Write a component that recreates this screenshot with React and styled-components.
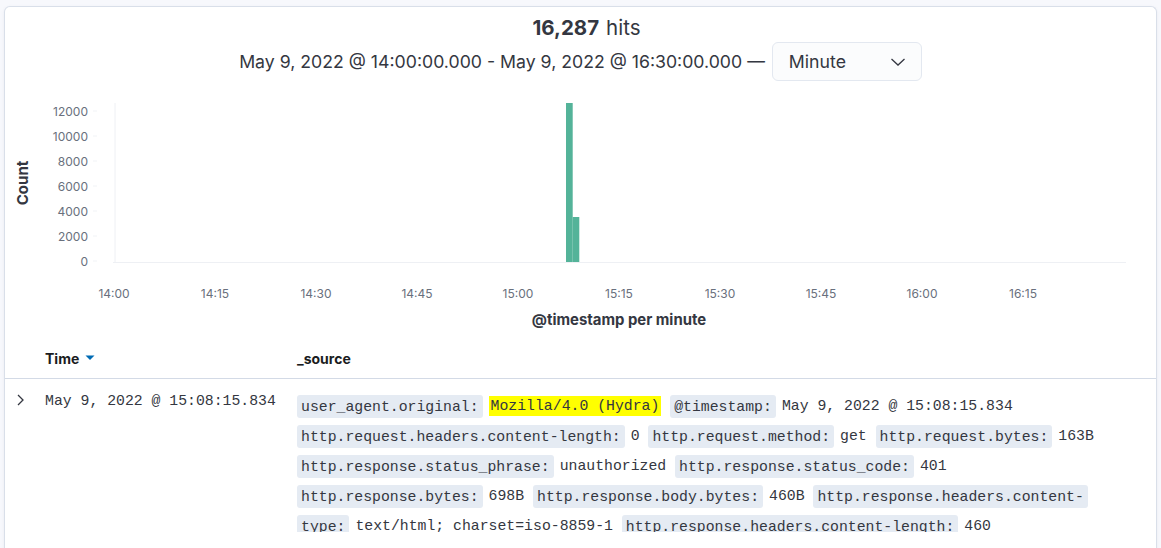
import React from 'react';
import styled, { createGlobalStyle } from 'styled-components';

const Global = createGlobalStyle`
  html, body { margin: 0; padding: 0; background: #f7f8fc; }
  body {
    font-family: Inter, "Noto Sans", sans-serif;
    color: #343741;
    overflow: hidden;
  }
`;

const Panel = styled.div`
  margin: 6px 4px 0 4px;
  background: #fff;
  border: 1px solid #d9dfe9;
  border-bottom: none;
  border-radius: 6px 6px 0 0;
  box-shadow: 0 1px 3px rgba(152, 162, 179, 0.15);
  min-height: 620px;
`;

const Summary = styled.div`
  padding-top: 8px;
  display: flex;
  flex-direction: column;
  align-items: center;
`;

const Hits = styled.div`
  padding-left: 12px;
  font-size: 20.5px;
  line-height: 26px;
  color: #343741;
  strong { font-weight: 700; margin-right: 7px; }
`;

const DateRow = styled.div`
  margin-top: 1px;
  display: flex;
  align-items: center;
  gap: 7px;
  font-size: 17.7px;
  color: #343741;
`;

const Select = styled.div`
  box-sizing: border-box;
  width: 150px;
  height: 39px;
  padding: 0 15px 0 16px;
  display: flex;
  align-items: center;
  justify-content: space-between;
  background: #fbfcfd;
  border: 1px solid #e3e8f0;
  border-radius: 6px;
  font-size: 17.7px;
  color: #343741;
`;

const ChartSvg = styled.svg`
  display: block;
  margin-top: 9px;
  font-family: Inter, "Noto Sans", sans-serif;
`;

const Table = styled.div`
  display: flex;
  flex-direction: column;
`;

const Row = styled.div`
  display: grid;
  grid-template-columns: 40px 252px 1fr;
  padding-right: 46px;
  ${(p) => p.$header && `
    height: 44px;
    box-sizing: border-box;
    padding-top: 3px;
    align-items: center;
    border-bottom: 1px solid #d3dae6;
  `}
`;

const HeadCell = styled.div`
  display: flex;
  align-items: center;
  gap: 6px;
  font-size: 14px;
  font-weight: 700;
  color: #1a1c21;
`;

const ToggleCell = styled.div`
  padding: 13px 0 0 7px;
`;

const TimeCell = styled.div`
  padding-top: 7px;
  font-family: "Liberation Mono", "DejaVu Sans Mono", monospace;
  font-size: 14.8px;
  line-height: 30px;
  color: #343741;
`;

const SourceList = styled.dl`
  margin: 0;
  padding-top: 12px;
  max-height: 141px;
  overflow: hidden;
  font-family: "Liberation Mono", "DejaVu Sans Mono", monospace;
  font-size: 14.8px;
  line-height: 30px;
  color: #343741;
`;

const Key = styled.dt`
  display: inline;
  margin: 0 6px 0 0;
  padding: 3.5px 4px;
  background: #e5ebf3;
  border-radius: 3px;
  box-decoration-break: clone;
  -webkit-box-decoration-break: clone;
`;

const Val = styled.dd`
  display: inline;
  margin: 0;
  word-break: break-all;
`;

const Mark = styled.mark`
  background: #ffff00;
  color: #343741;
  padding: 2px 2px;
`;

const fields = [
  ['user_agent.original:', 'Mozilla/4.0 (Hydra)', true],
  ['@timestamp:', 'May 9, 2022 @ 15:08:15.834'],
  ['http.request.headers.content-length:', '0'],
  ['http.request.method:', 'get'],
  ['http.request.bytes:', '163B'],
  ['http.response.status_phrase:', 'unauthorized'],
  ['http.response.status_code:', '401'],
  ['http.response.bytes:', '698B'],
  ['http.response.body.bytes:', '460B'],
  ['http.response.headers.content-type:', 'text/html; charset=iso-8859-1'],
  ['http.response.headers.content-length:', '460'],
];

const yTicks = ['12000', '10000', '8000', '6000', '4000', '2000', '0'];
const xTicks = ['14:00', '14:15', '14:30', '14:45', '15:00', '15:15', '15:30', '15:45', '16:00', '16:15'];

function Chart() {
  return (
    <ChartSvg width="1151" height="245" viewBox="0 0 1151 245">
      <text
        x="17"
        y="93"
        transform="rotate(-90 17 93)"
        textAnchor="middle"
        dominantBaseline="central"
        fontSize="15"
        fontWeight="700"
        fill="#343741"
      >
        Count
      </text>
      {yTicks.map((t, i) => (
        <g key={t}>
          <text
            x="83"
            y={21 + i * 25}
            textAnchor="end"
            dominantBaseline="central"
            fontSize="12"
            fill="#69707d"
          >
            {t}
          </text>
          <line x1="88" x2="92" y1={21 + i * 25} y2={21 + i * 25} stroke="#f1f3f6" />
        </g>
      ))}
      <line x1="110" x2="110" y1="13" y2="172" stroke="#eef0f4" strokeWidth="1" />
      <line x1="108" x2="1121" y1="172.5" y2="172.5" stroke="#eef0f4" strokeWidth="1" />
      <rect x="561" y="13" width="6.7" height="159" fill="#54b399" />
      <rect x="567.7" y="127" width="6.6" height="45" fill="#54b399" />
      {xTicks.map((t, i) => (
        <text
          key={t}
          x={109 + i * 101}
          y="203"
          textAnchor="middle"
          dominantBaseline="central"
          fontSize="12"
          fill="#69707d"
        >
          {t}
        </text>
      ))}
      <text
        x="614"
        y="230"
        textAnchor="middle"
        dominantBaseline="central"
        fontSize="14.9"
        fontWeight="700"
        fill="#343741"
      >
        @timestamp per minute
      </text>
    </ChartSvg>
  );
}

export default function App() {
  return (
    <>
      <Global />
      <Panel>
        <Summary>
          <Hits>
            <strong>16,287</strong>hits
          </Hits>
          <DateRow>
            <span>May 9, 2022 @ 14:00:00.000 - May 9, 2022 @ 16:30:00.000 —</span>
            <Select>
              <span>Minute</span>
              <svg width="16" height="10" viewBox="0 0 16 10">
                <polyline points="1.5,2 8,8 14.5,2" fill="none" stroke="#343741" strokeWidth="1.3" />
              </svg>
            </Select>
          </DateRow>
        </Summary>
        <Chart />
        <Table>
          <Row $header>
            <div />
            <HeadCell>
              Time
              <svg width="10" height="6" viewBox="0 0 10 6">
                <polygon points="0.5,0.5 9.5,0.5 5,5" fill="#006bb4" />
              </svg>
            </HeadCell>
            <HeadCell>_source</HeadCell>
          </Row>
          <Row>
            <ToggleCell>
              <svg width="16" height="16" viewBox="0 0 16 16">
                <polyline points="6,3 11,8 6,13" fill="none" stroke="#343741" strokeWidth="1.3" />
              </svg>
            </ToggleCell>
            <TimeCell>May 9, 2022 @ 15:08:15.834</TimeCell>
            <SourceList>
              {fields.map(([k, v, hl]) => (
                <React.Fragment key={k}>
                  <Key>{k}</Key>
                  <Val>{hl ? <Mark>{v}</Mark> : v}</Val>{' '}
                </React.Fragment>
              ))}
            </SourceList>
          </Row>
        </Table>
      </Panel>
    </>
  );
}
